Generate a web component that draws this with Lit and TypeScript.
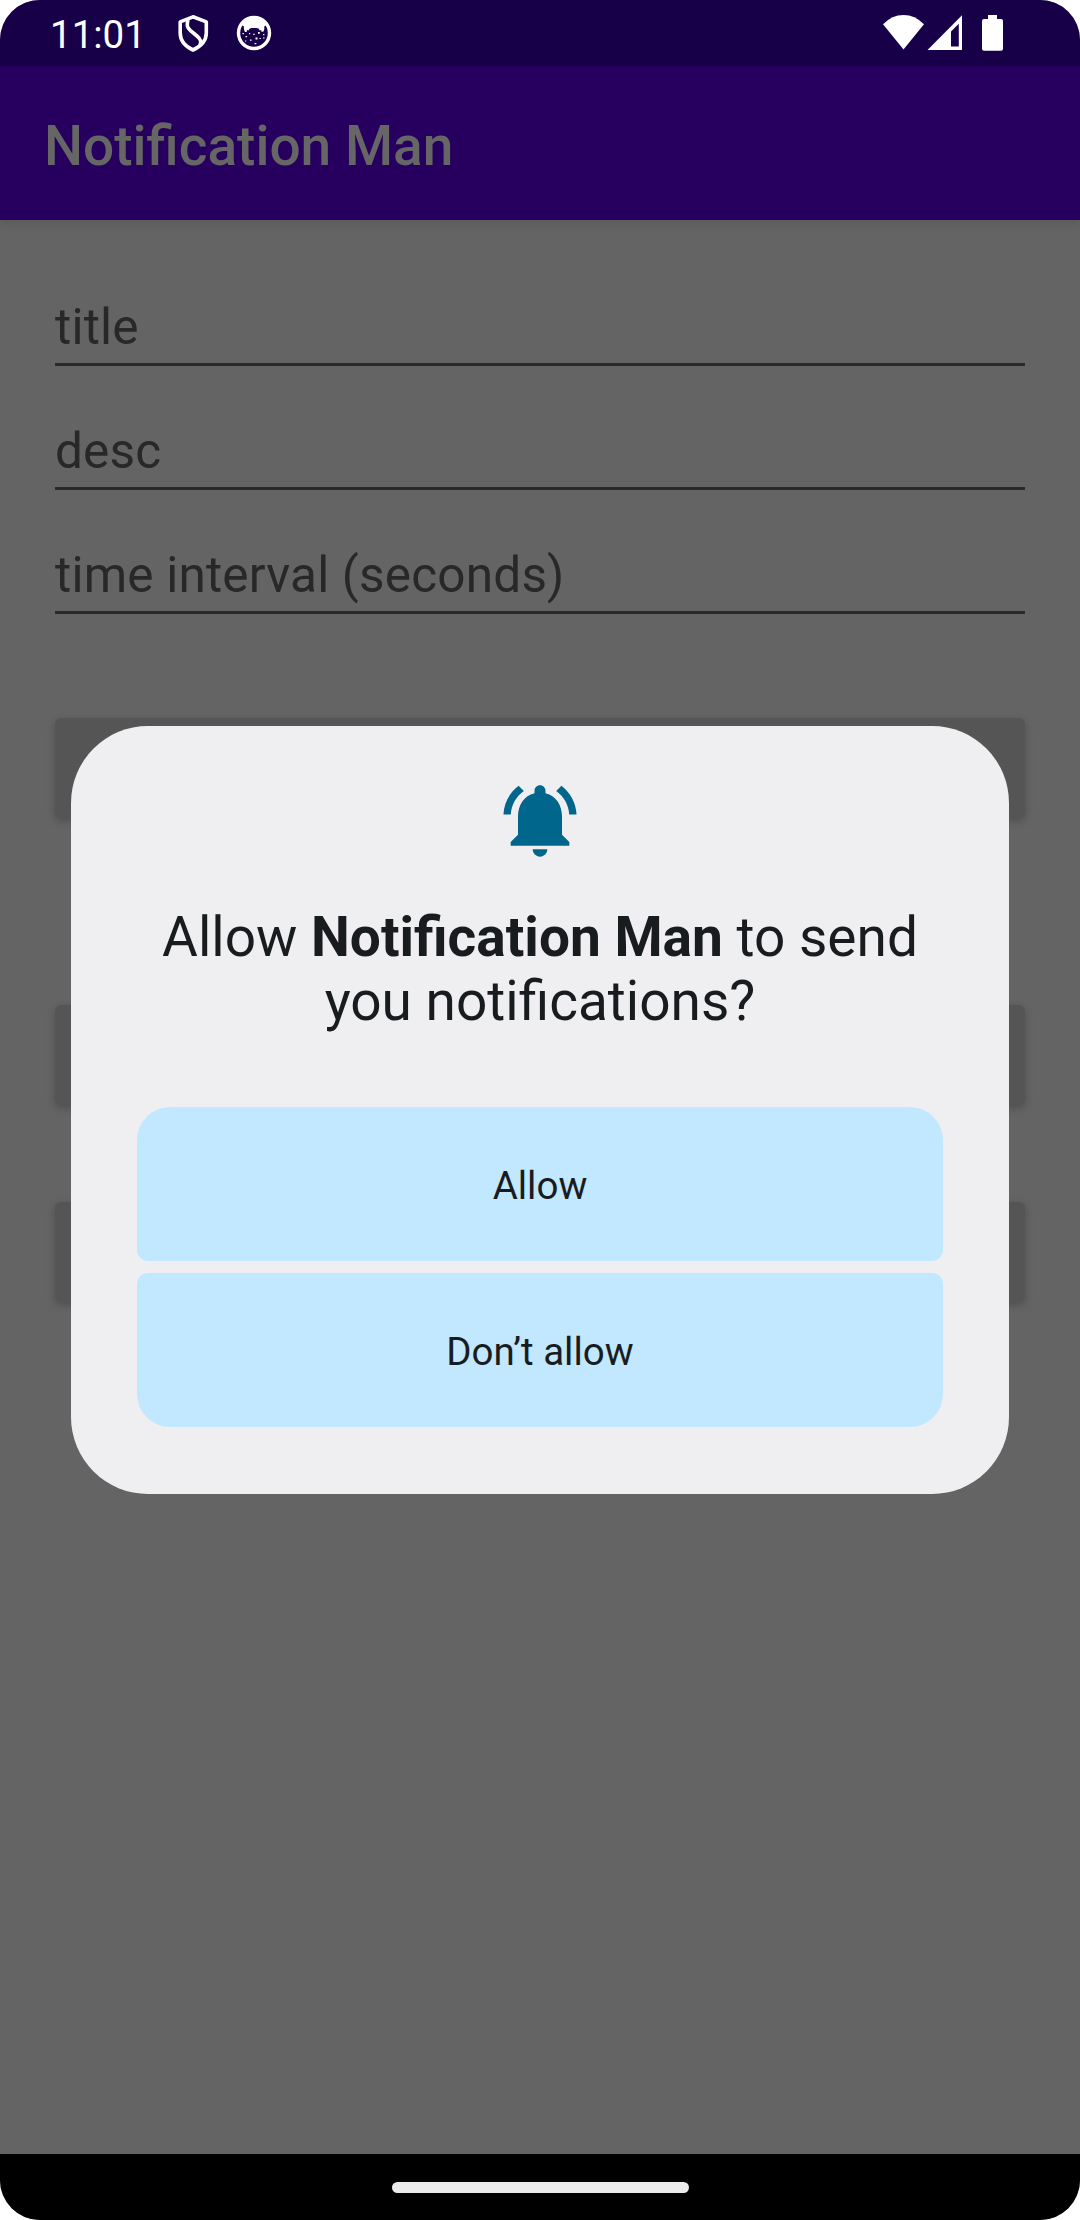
import { LitElement, html, css } from "lit";
import { customElement } from "lit/decorators.js";

@customElement("status-bar")
class StatusBar extends LitElement {
  static styles = css`
    :host { display: flex; align-items: flex-start; height: 66px; background: #180048; color: #fff; }
    .clock { font-size: 38.5px; line-height: 45px; margin: 12px 0 0 50px; width: 97px; }
    .icon { display: block; flex: none; }
    .shield { margin: 14px 0 0 30px; }
    .cat { margin: 15px 0 0 27px; }
    .signals { display: flex; margin: 14px 72px 0 auto; }
  `;
  render() {
    return html`
      <span class="clock">11:01</span>
      <svg class="icon shield" width="32" height="39" viewBox="0 0 32 39" fill="none" stroke="#fff" stroke-width="3.6" stroke-linejoin="round">
        <path d="M16 2.8 L29.3 7.9 V19 C29.3 27 24 32.3 16 36 C8 32.3 3.2 27 3.2 19 V7.9 Z" />
        <path d="M11 6 C9.6 10.8 9.8 13.4 13.5 16.6 L20 22 C23.9 25.3 24.6 27.8 22.8 31.5" />
      </svg>
      <svg class="icon cat" width="36" height="36" viewBox="0 0 36 36">
        <circle cx="18" cy="18" r="15.5" fill="none" stroke="#fff" stroke-width="3.4" />
        <path d="M5 9.5 A15.5 15.5 0 0 1 31 9.5 L28.2 11.5 C28.6 13.5 28.2 15.5 27.2 16.8 L25.4 16.8 L25.2 15 L23.8 15.4 L22.6 13.4 C20 12.8 16 12.8 13.8 13.4 L12.4 15.4 L11 15 L10.6 17 L9 17 C8 15.5 7.6 13.5 8 11.5 Z" fill="#fff" />
        <g fill="#fff">
          <rect x="6.5" y="18" width="1.4" height="1.2" /><rect x="9.5" y="21" width="1.6" height="1.2" />
          <rect x="13" y="18" width="1.2" height="1.2" /><rect x="17" y="18.8" width="1.8" height="1" />
          <rect x="22" y="17" width="1.8" height="1.8" /><rect x="27" y="19" width="1.4" height="1.2" />
          <rect x="19.5" y="22.5" width="2" height="2" /><rect x="23.5" y="23" width="1.4" height="1" />
          <rect x="14" y="24.5" width="1.5" height="1.3" /><rect x="18.5" y="28" width="1.8" height="1.2" />
          <rect x="27" y="22.5" width="1.6" height="1" /><rect x="9" y="25.5" width="1.2" height="1" />
        </g>
      </svg>
      <svg class="icon signals" width="126" height="38" viewBox="882 14 126 38" fill="#fff">
        <path d="M903.5 49.5 L883 24.3 Q892 15 903.5 15 Q915 15 924 24.3 Z" />
        <path fill-rule="evenodd" d="M927.5 50 L962 15.2 V50 Z M951 31.5 V46.6 H958.8 V23.8 Z" />
        <path d="M988 15 H997 V19 H1001 Q1003 19 1003 21 V48.7 Q1003 50.7 1001 50.7 H984 Q982 50.7 982 48.7 V21 Q982 19 984 19 H988 Z" />
      </svg>
    `;
  }
}

@customElement("permission-dialog")
class PermissionDialog extends LitElement {
  static styles = css`
    :host {
      display: flex; flex-direction: column; align-items: center; box-sizing: border-box;
      width: 938px; height: 768px; padding: 50px 66px 67px; border-radius: 77px;
      background: #efeff1; color: #191c1e;
    }
    .bell { display: block; width: 88px; height: 88px; flex: none; }
    .message { margin: 41px 0 0; font-size: 55px; line-height: 64px; font-weight: 400; text-align: center; }
    .actions { display: flex; flex-direction: column; gap: 12px; width: 100%; margin-top: auto; }
    .action {
      height: 154px; border: 0; padding: 3px 0 0; font: 400 38.5px/45px Roboto, sans-serif;
      color: #191c1e; background: #c2e8ff; border-radius: 11px;
    }
    .first { border-radius: 33px 33px 11px 11px; }
    .last { border-radius: 11px 11px 33px 33px; }
  `;
  render() {
    return html`
      <svg class="bell" viewBox="0 0 24 24" fill="#00668b">
        <path d="M7.58 4.08L6.15 2.65C3.75 4.48 2.17 7.3 2.03 10.5h2c.15-2.65 1.51-4.97 3.55-6.42zm12.39 6.42h2c-.15-3.2-1.73-6.02-4.12-7.85l-1.42 1.43c2.02 1.45 3.39 3.77 3.54 6.42zM18 11c0-3.07-1.64-5.64-4.5-6.32V4c0-.83-.67-1.5-1.5-1.5s-1.5.67-1.5 1.5v.68C7.63 5.36 6 7.92 6 11v5l-2 2v1h16v-1l-2-2v-5z" />
        <path d="M12 22c1.1 0 2-.9 2-2h-4c0 1.1.9 2 2 2z" />
      </svg>
      <p class="message">Allow <b>Notification Man</b> to send<br />you notifications?</p>
      <div class="actions">
        <button class="action first">Allow</button>
        <button class="action last">Don’t allow</button>
      </div>
    `;
  }
}

@customElement("app-root")
class AppRoot extends LitElement {
  static styles = css`
    :host { display: block; background: #fff; font-family: Roboto, sans-serif; }
    .screen {
      position: relative; display: flex; flex-direction: column; width: 1080px; height: 2220px;
      border-radius: 40px; overflow: hidden; background: #646464;
    }
    .toolbar {
      display: flex; align-items: center; box-sizing: border-box; height: 154px; padding: 5px 44px 0;
      background: #27005f; color: #666; font-size: 55px; font-weight: 500; z-index: 1;
      box-shadow: 0 4px 10px rgba(0, 0, 0, 0.1);
    }
    .form { flex: 1; display: flex; flex-direction: column; padding: 55px 55px 0; }
    .field {
      box-sizing: border-box; height: 91px; margin-bottom: 33px; padding-top: 23px;
      border-bottom: 3px solid #2a2a2a; color: #282828; font-size: 49.5px; line-height: 58px;
      letter-spacing: 0.2px;
    }
    .button { height: 100px; border-radius: 6px; background: #555; box-shadow: 0 3px 8px rgba(0, 0, 0, 0.22); }
    .start { margin-top: 71px; }
    .stop { margin-top: 187px; }
    .clear { margin-top: 97px; }
    .nav { display: flex; justify-content: center; align-items: center; height: 66px; background: #000; }
    .handle { width: 297px; height: 11px; border-radius: 6px; background: #ebebeb; }
    .dialog { position: absolute; left: 71px; top: 726px; z-index: 2; }
  `;
  render() {
    return html`
      <div class="screen">
        <status-bar></status-bar>
        <header class="toolbar">Notification Man</header>
        <main class="form">
          ${["title", "desc", "time interval (seconds)"].map((label) => html`<div class="field">${label}</div>`)}
          <div class="button start"></div>
          <div class="button stop"></div>
          <div class="button clear"></div>
        </main>
        <footer class="nav"><div class="handle"></div></footer>
        <permission-dialog class="dialog"></permission-dialog>
      </div>
    `;
  }
}
